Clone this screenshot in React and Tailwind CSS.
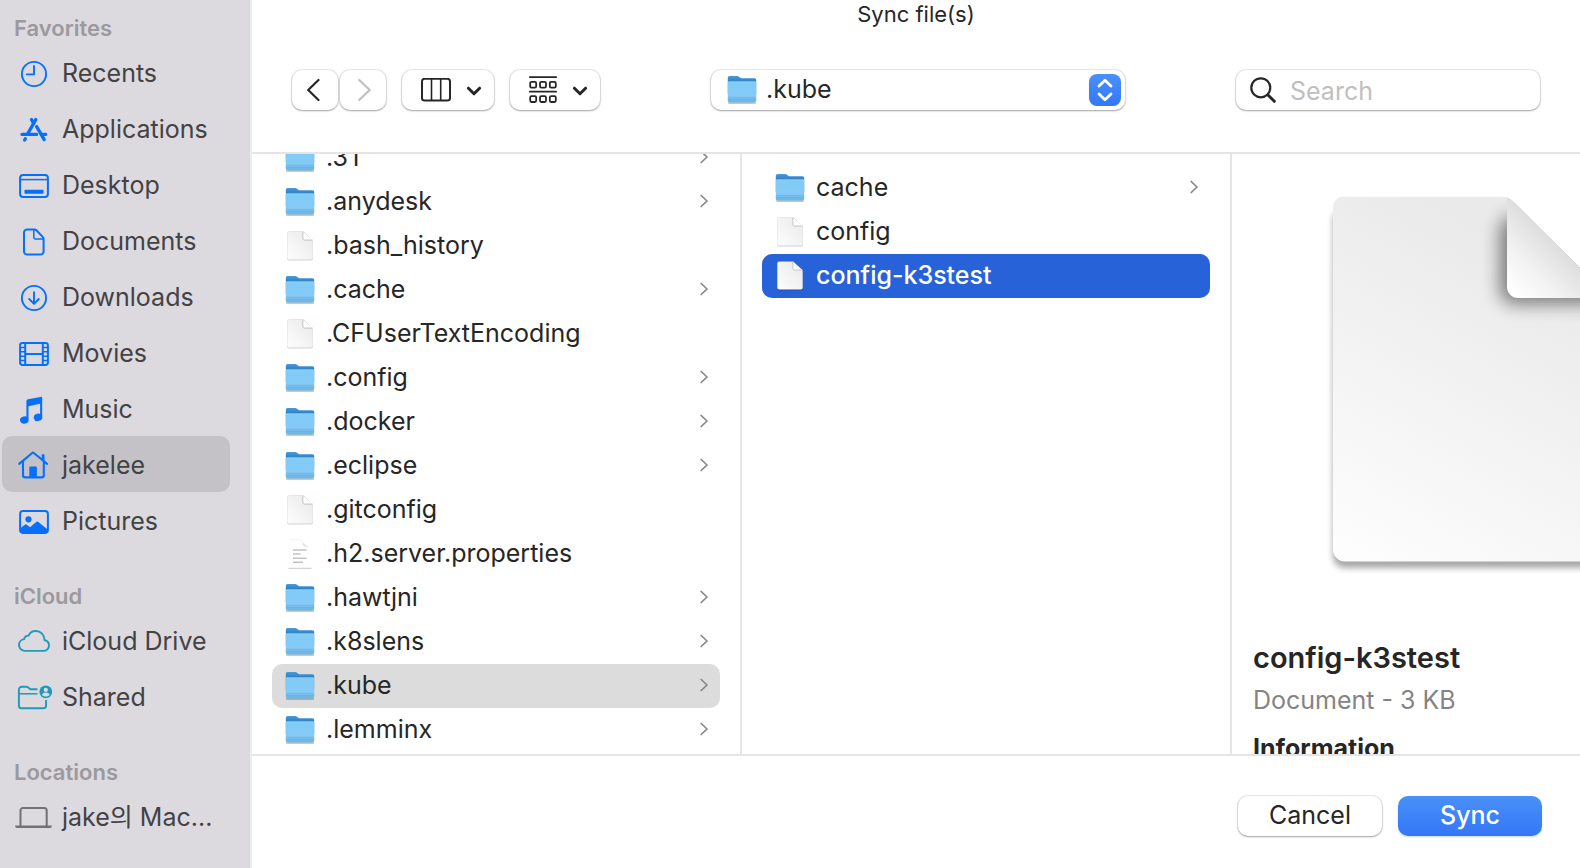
import { useState } from "react";

const icons = {
  recents: (
    <g fill="none" stroke="currentColor" strokeWidth="1.9" strokeLinecap="round" strokeLinejoin="round">
      <circle cx="18" cy="17" r="12.1" />
      <path d="M18 9v8.4h-7.2" />
    </g>
  ),
  applications: (
    <g fill="none" stroke="currentColor" strokeWidth="3.3" strokeLinecap="round">
      <path d="M19.800 6.600 11.700 20.800" />
      <path d="M15.500 6.600l2.200 3.800" />
      <path d="M20.600 13.600 28.200 26.600" />
      <path d="M6 21.400h14.600M26 21.400h3.700" />
      <path d="M9.300 25.800l-.7 1.200" />
    </g>
  ),
  desktop: (
    <g fill="none" stroke="currentColor" strokeWidth="2">
      <rect x="4.1" y="6.1" width="27.8" height="21.8" rx="3" />
      <path d="M4 10.600h28" strokeWidth="1.5" />
      <rect x="8.4" y="20.800" width="19.2" height="4" rx="1" fill="currentColor" stroke="none" />
    </g>
  ),
  documents: (
    <g fill="none" stroke="currentColor" strokeWidth="2" strokeLinejoin="round">
      <path d="M18.6 4.500H11a3 3 0 0 0-3 3v19a3 3 0 0 0 3 3h13.6a3 3 0 0 0 3-3V13.900a2.6 2.6 0 0 0-.7-1.8L20.400 5.300a2.600 2.600 0 0 0-1.800-.8z" />
      <path d="M17.800 4.500v7.800a1.700 1.700 0 0 0 1.700 1.700h8" strokeWidth="1.500" />
    </g>
  ),
  downloads: (
    <g fill="none" stroke="currentColor" strokeWidth="1.9" strokeLinecap="round" strokeLinejoin="round">
      <circle cx="18" cy="17" r="12.1" />
      <path d="M18 11.200v11.400M13.200 18l4.800 4.800 4.800-4.800" />
    </g>
  ),
  movies: (
    <g fill="none" stroke="currentColor" strokeWidth="2">
      <rect x="4.1" y="6.1" width="27.8" height="21.8" rx="2.4" />
      <path d="M9.200 6v22M26.800 6v22M9 17h18" />
      <path d="M4 10.500h5M4 14.800h5M4 19.200h5M4 23.500h5M27 10.500h5M27 14.800h5M27 19.200h5M27 23.500h5" strokeWidth="1.500" />
    </g>
  ),
  music: (
    <g fill="currentColor">
      <path d="M10.400 8.200c0-1.100.6-1.800 1.600-2L24.600 3.900c1-.2 1.600.2 1.600 1.200v18.300h-2.100V10.800L12.500 13.200v13h-2.100z" />
      <ellipse cx="8.300" cy="27" rx="4.300" ry="3.700" transform="rotate(-15 8.300 27)" />
      <ellipse cx="22" cy="24.300" rx="4.300" ry="3.700" transform="rotate(-15 22 24.300)" />
    </g>
  ),
  home: (
    <g fill="none" stroke="currentColor" strokeWidth="2.1" strokeLinecap="round" strokeLinejoin="round">
      <path d="M3.200 14.900 16.200 4q.8-.6 1.600 0l13.300 10.900" />
      <path d="M7 13v13.200a2.200 2.200 0 0 0 2.200 2.200h16.400a2.200 2.200 0 0 0 2.200-2.200V13" />
      <path d="M26.400 5.900h1.400v6l-1.400-1z" fill="currentColor" strokeWidth="1.400" />
      <path d="M13.300 28.400v-9.600q0-1.200 1.200-1.200h5.200q1.200 0 1.200 1.200v9.600z" fill="currentColor" stroke="none" />
    </g>
  ),
  pictures: (
    <g>
      <rect x="4.1" y="6.100" width="27.800" height="21.800" rx="2.800" fill="none" stroke="currentColor" strokeWidth="2" />
      <circle cx="12.500" cy="14.300" r="3.100" fill="currentColor" />
      <path d="M4 23.500 8.800 19.700q1-.8 2 0l3.200 2.500 6.200-5.300q1.100-.9 2.200 0L32 24.700v1.500l-2.500 2.200h-23L4 26.200z" fill="currentColor" />
    </g>
  ),
  cloud: (
    <path
      d="M8.800 25.900a6 6 0 0 1-5.800-5.900c0-3 2.300-5.500 5.200-5.900.2-2.300 2.200-3.700 4.300-3.500C13.800 7.700 16.500 6 19.700 6c5.100 0 8.800 3.900 8.800 9 2.700.7 4.500 2.800 4.500 5.400 0 3.100-2.500 5.500-5.500 5.500z"
      fill="none"
      stroke="currentColor"
      strokeWidth="1.900"
      strokeLinejoin="round"
    />
  ),
  shared: (
    <g>
      <g fill="none" stroke="currentColor" strokeWidth="1.900" strokeLinejoin="round">
        <path d="M21.500 8.200h-7.200l-2.400-1.900Q11.200 5.800 10.200 5.800H5.800A2.900 2.900 0 0 0 2.900 8.700v15.700a2.900 2.900 0 0 0 2.900 2.900h21.400a2.900 2.900 0 0 0 2.900-2.900V19" />
        <path d="M3 12.800h18.500" strokeWidth="1.500" />
      </g>
      <circle cx="29.800" cy="10.800" r="6.400" fill="currentColor" />
      <circle cx="29.800" cy="8.900" r="2.100" fill="#dcdadf" />
      <path d="M25.900 14q.8-2.400 3.900-2.400t3.900 2.400q-1.700 1.500-3.900 1.500t-3.900-1.500z" fill="#dcdadf" />
    </g>
  ),
  laptop: (
    <g>
      <path d="M4.500 25V9.500a2.600 2.600 0 0 1 2.600-2.600h21a2.600 2.600 0 0 1 2.600 2.600V25" fill="none" stroke="currentColor" strokeWidth="2" />
      <path d="M-.8 24.400h36.600v.9q0 1.700-1.800 1.700H1q-1.800 0-1.800-1.700z" fill="currentColor" />
    </g>
  ),
};

const sections = [
  {
    title: "Favorites",
    color: "text-[#0670fa]",
    items: [
      ["Recents", "recents"],
      ["Applications", "applications"],
      ["Desktop", "desktop"],
      ["Documents", "documents"],
      ["Downloads", "downloads"],
      ["Movies", "movies"],
      ["Music", "music"],
      ["jakelee", "home"],
      ["Pictures", "pictures"],
    ],
  },
  {
    title: "iCloud",
    color: "text-[#1e9bb9]",
    items: [
      ["iCloud Drive", "cloud"],
      ["Shared", "shared"],
    ],
  },
  { title: "Locations", color: "text-[#737177]", items: [["jake의 Mac...", "laptop"]] },
];

const homeFiles = [
  [".3T", "folder"],
  [".anydesk", "folder"],
  [".bash_history", "file"],
  [".cache", "folder"],
  [".CFUserTextEncoding", "file"],
  [".config", "folder"],
  [".docker", "folder"],
  [".eclipse", "folder"],
  [".gitconfig", "file"],
  [".h2.server.properties", "text"],
  [".hawtjni", "folder"],
  [".k8slens", "folder"],
  [".kube", "folder"],
  [".lemminx", "folder"],
];

const kubeFiles = [
  ["cache", "folder"],
  ["config", "file"],
  ["config-k3stest", "file"],
];

function Gradients() {
  return (
    <svg className="absolute size-0" aria-hidden="true">
      <defs>
        <linearGradient id="folderBack" x1="0" y1="0" x2="0" y2="1">
          <stop offset="0" stopColor="#4a9bd6" />
          <stop offset="0.300" stopColor="#2f7fc6" />
          <stop offset="1" stopColor="#3a86c8" />
        </linearGradient>
        <linearGradient id="folderFront" x1="0" y1="0" x2="0" y2="1">
          <stop offset="0" stopColor="#80cbf7" />
          <stop offset="0.740" stopColor="#86caf6" />
          <stop offset="0.820" stopColor="#76beed" />
          <stop offset="1" stopColor="#68b4e6" />
        </linearGradient>
        <linearGradient id="paper" x1="1" y1="0" x2="0" y2="1">
          <stop offset="0" stopColor="#e9e9e9" />
          <stop offset="1" stopColor="#fdfdfd" />
        </linearGradient>
      </defs>
    </svg>
  );
}

function FileIcon({ kind }) {
  if (kind === "folder") {
    return (
      <svg viewBox="0 0 30 32" className="h-8 w-[30px] shrink-0" aria-hidden="true">
        <rect x="1" y="28" width="28" height="2" rx="1" fill="#000" opacity="0.220" />
        <path d="M.8 3.700q0-1.700 1.700-1.700h7.600q1 0 1.700.6l1.500 1.200q.7.500 1.600.5h12.600q1.700 0 1.700 1.700V20H.8z" fill="url(#folderBack)" />
        <path d="M.8 9q0-1.200 1.200-1.200h26q1.200 0 1.200 1.200v17.600q0 1.900-1.900 1.900H2.700Q.8 28.500.8 26.600z" fill="url(#folderFront)" />
        <path d="M1 8.300q.4-.5 1.100-.5h25.800q.7 0 1.100.5" fill="none" stroke="#9bd8fa" strokeWidth="0.800" />
        <path d="M.8 23.300h28.400M.8 25.300h28.400" stroke="#5ba9de" strokeWidth="0.700" opacity="0.700" />
      </svg>
    );
  }
  if (kind === "text") {
    return (
      <svg viewBox="0 0 30 32" className="h-8 w-[30px] shrink-0" aria-hidden="true">
        <path d="M3.500 1.500h13l9.500 10v18h-22.500z" fill="#fefefe" />
        <path d="M4 1.700h12.500" stroke="#ececec" strokeWidth="0.800" />
        <path d="M15 1.500c2 .6 2.600 2 2.700 4.200.1 1.800 1 2.800 2.800 3 2.600.2 4 .8 5 2.400z" fill="#e6e6e6" />
        <path d="M8 12h13.500M8 16h7.500M8 20.200h13.500M8 24.300h10" stroke="#c2c2c2" strokeWidth="1.500" />
        <path d="M3.500 30.300h23" stroke="#c9c9c9" strokeWidth="1" />
      </svg>
    );
  }
  return (
    <svg viewBox="0 0 30 32" className="h-8 w-[30px] shrink-0" aria-hidden="true">
      <path d="M4 1.300h14.500L28 10.500v18a2 2 0 0 1-2 2H4a2 2 0 0 1-2-2v-25a2 2 0 0 1 2-2z" fill="#000" opacity="0.180" />
      <path d="M4 1.500h14.300L27.700 10.500v17.300a1.800 1.800 0 0 1-1.800 1.800H4.100a1.800 1.800 0 0 1-1.800-1.800V3.300A1.800 1.800 0 0 1 4.100 1.500z" fill="url(#paper)" />
      <path d="M17.900 1.900v6.700a1.500 1.500 0 0 0 1.500 1.500h8" fill="#fff" stroke="#bdbdbd" strokeWidth="0.900" />
    </svg>
  );
}

function FileRow({ name, kind, selected, tone, onSelect }) {
  const active = tone === "blue" ? "bg-[#2862d9] text-white font-medium" : "bg-[#dcdcdc] text-[#262626]";
  return (
    <li>
      <button
        type="button"
        aria-pressed={selected}
        onClick={onSelect}
        className={`flex h-11 w-full items-center gap-[11px] rounded-[10px] pr-[11px] pl-[13px] text-left ${selected ? active : "text-[#262626]"}`}
      >
        <FileIcon kind={kind} />
        <span className="mb-0.5 min-w-0 flex-1 truncate">{name}</span>
        {kind === "folder" && (
          <svg viewBox="0 0 10 14" className="mb-0.5 h-3.5 w-2.5" fill="none" stroke="#868686" strokeWidth="1.700" strokeLinecap="round" strokeLinejoin="round" aria-hidden="true">
            <path d="M2.200 1.500 8 7 2.200 12.500" />
          </svg>
        )}
      </button>
    </li>
  );
}

function ChevronDown() {
  return (
    <svg viewBox="0 0 16 10" className="mt-0.5 h-2.5 w-4" fill="none" stroke="currentColor" strokeWidth="3" strokeLinecap="round" strokeLinejoin="round" aria-hidden="true">
      <path d="M2.400 2.200 8 7.800l5.600-5.600" />
    </svg>
  );
}

const raised = "rounded-[10px] bg-white shadow-[0_0_1px_1px_rgba(0,0,0,0.09),0_1px_2px_rgba(0,0,0,0.3)]";

export default function App() {
  const [place, setPlace] = useState("jakelee");
  const [folder, setFolder] = useState(".kube");
  const [file, setFile] = useState("config-k3stest");

  return (
    <div className="flex h-screen overflow-hidden bg-white font-['Inter','Noto_Sans_CJK_KR',sans-serif] text-[25px] leading-8 text-[#262626]">
      <Gradients />
      <nav className="w-[252px] shrink-0 border-r-2 border-[#ececef] bg-[#dcdadf] pt-3" aria-label="Places">
        {sections.map((section) => (
          <section key={section.title} className="mb-8">
            <h2 className="h-8 pl-3.5 text-[22px] leading-8 font-semibold text-[#9b999e]">{section.title}</h2>
            <ul>
              {section.items.map(([label, icon]) => (
                <li key={label}>
                  <a
                    href={`#${icon}`}
                    onClick={() => setPlace(label)}
                    className={`mr-5 ml-0.5 flex h-14 items-center gap-2 rounded-[10px] pt-0.5 pl-3 whitespace-nowrap text-[#434245] ${place === label ? "bg-[#c4c2c7]" : ""}`}
                  >
                    <svg viewBox="-2 0 40 32" className={`h-8 w-10 shrink-0 ${section.color}`} aria-hidden="true">
                      {icons[icon]}
                    </svg>
                    {label}
                  </a>
                </li>
              ))}
            </ul>
          </section>
        ))}
      </nav>

      <main className="flex min-w-0 flex-1 flex-col">
        <header className="border-b-2 border-[#e5e5e5] pb-[42px]">
          <h1 className="text-center text-[22px] leading-7">Sync file(s)</h1>
          <div className="flex items-center justify-between px-10 pt-[42px]">
            <div className="flex items-center">
              <button type="button" aria-label="Back" className={`${raised} flex h-10 w-[46px] items-center justify-center`}>
                <svg viewBox="0 0 16 24" className="h-6 w-4" fill="none" stroke="#262626" strokeWidth="2.200" strokeLinecap="round" strokeLinejoin="round">
                  <path d="M11.500 2 1.200 12 11.500 22" />
                </svg>
              </button>
              <button type="button" aria-label="Forward" className={`${raised} ml-0.5 flex h-10 w-[46px] items-center justify-center`}>
                <svg viewBox="0 0 16 24" className="h-6 w-4" fill="none" stroke="#c0c0c0" strokeWidth="2.200" strokeLinecap="round" strokeLinejoin="round">
                  <path d="M4.200 2l10.500 10L4.200 22" />
                </svg>
              </button>
              <button type="button" aria-label="Column view" className={`${raised} ml-4 flex h-10 w-[92px] items-center justify-end gap-[15px] pr-3`}>
                <svg viewBox="0 0 30 24" className="h-6 w-[30px]" fill="none" stroke="#262626" strokeWidth="2" aria-hidden="true">
                  <rect x="1" y="0.800" width="28" height="21.800" rx="2.600" />
                  <path d="M10.500 1v22M19.700 1v22" strokeWidth="1.600" />
                </svg>
                <ChevronDown />
              </button>
              <button type="button" aria-label="Group items" className={`${raised} ml-4 flex h-10 w-[90px] items-center justify-end gap-[15px] pr-3`}>
                <svg viewBox="0 0 28 28" className="size-7" fill="none" stroke="#262626" strokeWidth="1.800" aria-hidden="true">
                  <path d="M.9 1.200h26.200M.9 15.700h26.200" strokeLinecap="round" />
                  <rect x="1.200" y="5.800" width="6" height="5.800" rx="1.400" />
                  <rect x="11" y="5.800" width="6" height="5.800" rx="1.400" />
                  <rect x="20.800" y="5.800" width="6" height="5.800" rx="1.400" />
                  <rect x="1.200" y="20.200" width="6" height="5.800" rx="1.400" />
                  <rect x="11" y="20.200" width="6" height="5.800" rx="1.400" />
                  <rect x="20.800" y="20.200" width="6" height="5.800" rx="1.400" />
                </svg>
                <ChevronDown />
              </button>
            </div>

            <div className={`${raised} relative h-10 w-[414px]`}>
              <select aria-label="Folder" className="h-full w-full appearance-none bg-transparent pr-12 pb-0.5 pl-[55px]">
                <option>.kube</option>
                <option>jakelee</option>
              </select>
              <span className="pointer-events-none absolute inset-y-0 left-4 flex items-center">
                <FileIcon kind="folder" />
              </span>
              <span className="pointer-events-none absolute top-1 right-1 flex size-8 items-center justify-center rounded-lg bg-linear-to-b from-[#4a90f9] to-[#3377f6]">
                <svg viewBox="0 0 16 24" className="h-6 w-4" fill="none" stroke="#fff" strokeWidth="2.800" strokeLinecap="round" strokeLinejoin="round">
                  <path d="M2 8l6-5.800L14 8M2 16l6 5.800 6-5.800" />
                </svg>
              </span>
            </div>

            <label className={`${raised} flex h-10 w-[304px] items-center gap-3.5 px-3.5`}>
              <svg viewBox="0 0 26 26" className="size-[26px] shrink-0" fill="none" stroke="#262626" strokeLinecap="round" aria-hidden="true">
                <circle cx="10.800" cy="10.800" r="9.500" strokeWidth="2.200" />
                <path d="M18 18l6.300 6.300" strokeWidth="3" />
              </svg>
              <input type="search" aria-label="Search" placeholder="Search" className="w-full min-w-0 bg-transparent pt-0.5 outline-none placeholder:text-[#bfbfbf]" />
            </label>
          </div>
        </header>

        <div className="flex min-h-0 flex-1">
          <div className="flex w-[490px] shrink-0 flex-col justify-end overflow-hidden border-r-2 border-[#e5e5e5] px-5 pb-0.5">
            <ul>
              {homeFiles.map(([name, kind]) => (
                <FileRow key={name} name={name} kind={kind} selected={folder === name} onSelect={() => setFolder(name)} />
              ))}
            </ul>
          </div>
          <div className="w-[490px] shrink-0 overflow-hidden border-r-2 border-[#e5e5e5] px-5 pt-3">
            <ul>
              {kubeFiles.map(([name, kind]) => (
                <FileRow key={name} name={name} kind={kind} tone="blue" selected={file === name} onSelect={() => setFile(name)} />
              ))}
            </ul>
          </div>
          <div className="min-w-0 flex-1 overflow-hidden">
            <svg viewBox="0 0 486 480" className="h-[480px] w-[486px] max-w-none" aria-hidden="true">
              <defs>
                <linearGradient id="page" gradientUnits="userSpaceOnUse" x1="300" y1="110" x2="130" y2="410">
                  <stop offset="0" stopColor="#eaeaea" />
                  <stop offset="1" stopColor="#fdfdfd" />
                </linearGradient>
                <linearGradient id="fold" gradientUnits="userSpaceOnUse" x1="325" y1="92" x2="280" y2="137">
                  <stop offset="0" stopColor="#dedede" />
                  <stop offset="0.500" stopColor="#f1f1f1" />
                  <stop offset="1" stopColor="#ffffff" />
                </linearGradient>
                <filter id="soft" x="-20%" y="-20%" width="140%" height="140%">
                  <feGaussianBlur stdDeviation="3" />
                </filter>
                <filter id="softer" x="-50%" y="-50%" width="200%" height="200%">
                  <feGaussianBlur stdDeviation="9" />
                </filter>
                <clipPath id="pageShape">
                  <path d="M113 42H267q9 0 15 6L377 143V395.500a12 12 0 0 1-12 12H113a12 12 0 0 1-12-12V54a12 12 0 0 1 12-12z" />
                </clipPath>
              </defs>
              <path d="M113 55H263L377 152V402a12 12 0 0 1-12 12H113a12 12 0 0 1-12-12V67a12 12 0 0 1 12-12z" fill="#000" opacity="0.340" filter="url(#soft)" />
              <g clipPath="url(#pageShape)">
                <rect x="101" y="42" width="276" height="366" fill="url(#page)" />
                <path d="M268 70v66a14 14 0 0 0 14 14h95v-20L280 60z" fill="#000" opacity="0.480" filter="url(#softer)" />
                <path d="M101 42.500h190" stroke="#f8f8f8" strokeWidth="1.500" />
                <path d="M275 40v93a11 11 0 0 0 11 11h92z" fill="url(#fold)" />
              </g>
            </svg>
            <div className="mt-0.5 px-[21px]">
              <h2 className="h-11 text-[29px] leading-11 font-semibold whitespace-nowrap">config-k3stest</h2>
              <p className="h-10 leading-10 whitespace-nowrap text-[#848484]">Document - 3 KB</p>
              <h3 className="mt-2 leading-10 font-bold">Information</h3>
            </div>
          </div>
        </div>

        <footer className="flex justify-end gap-4 border-t-2 border-[#e5e5e5] px-[38px] pt-10 pb-8">
          <button type="button" className={`${raised} h-10 w-36 pb-0.5`}>
            Cancel
          </button>
          <button type="button" className="h-10 w-36 rounded-[10px] bg-linear-to-b from-[#4a90f9] to-[#3377f6] pb-0.5 font-medium text-white shadow-[0_1px_2px_rgba(50,110,230,0.3)]">
            Sync
          </button>
        </footer>
      </main>
    </div>
  );
}
